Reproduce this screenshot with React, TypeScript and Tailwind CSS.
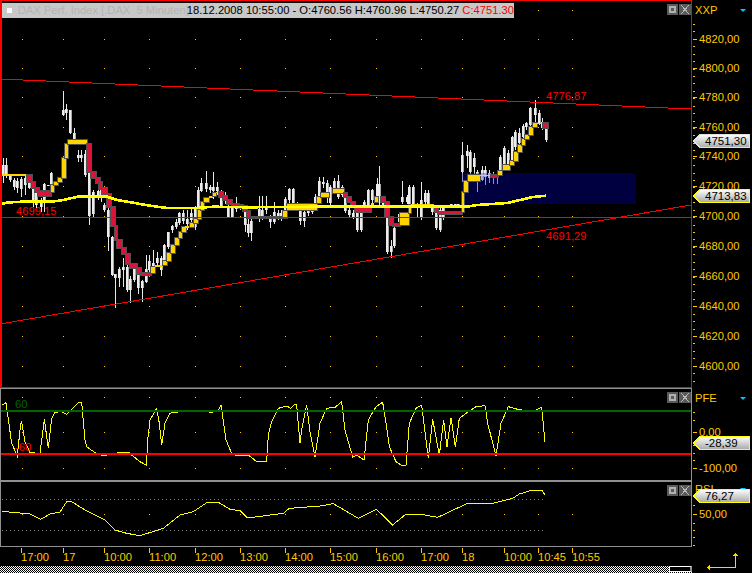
import React from "react";

type Candle = [number, number, number, number, number];
type Block = [number, number, number, number, "y" | "r"];

const candles: Candle[] = [
  [3,158,165,175,183],[6,158,165,175,178],[10,175,176,180,182],[14,178,180,187,190],[17,178,181,188,193],[21,177,179,189,197],[25,176,178,185,195],[29,182,183,188,189],[33,185,189,203,207],[36,188,190,205,208],[41,198,200,207,212],[44,183,184,200,212],[48,185,185,186,186],[51,172,173,184,187],
  [63,91,110,115,116],[66,104,109,113,120],[70,110,110,133,134],[74,128,133,140,141],[78,150,155,158,162],[81,150,155,158,162],[85,150,154,175,177],[89,172,172,216,225],[93,190,192,214,217],[98,189,191,195,200],[101,187,189,195,202],[104,203,205,210,212],[108,208,210,237,251],[112,236,237,275,276],[115,274,274,278,308],[119,267,269,278,287],[123,258,267,270,287],[127,265,267,290,292],[130,276,279,290,303],[134,266,269,280,282],[138,268,274,288,294],[142,280,281,288,302],[146,255,269,282,283],[149,255,261,270,272],[153,250,263,267,270],[157,252,258,263,265],[161,256,258,270,276],[164,244,245,261,263],[168,232,232,247,249],[172,225,226,230,233],[176,219,222,227,229],[179,212,213,223,225],[183,210,213,221,224],[187,210,219,224,230],[191,208,213,220,222],[195,206,209,227,230],[198,187,190,209,210],[201,178,183,191,192],[206,171,183,189,192],[210,185,187,190,193],[213,172,187,191,199],[217,182,187,191,195],[221,190,193,207,208],[225,192,196,199,204],[228,200,207,217,218],[232,203,208,217,218],[236,197,206,209,212],[240,204,205,208,210],[245,205,212,225,232],[248,210,224,233,237],
  [251,217,221,233,241],[259,196,209,218,222],[262,196,210,216,220],[266,196,207,210,214],[270,215,218,222,228],[274,202,212,222,224],[278,210,213,218,220],[281,210,213,218,221],[285,197,199,211,212],[289,188,189,200,203],[293,188,189,203,205],[297,202,205,208,210],[300,206,209,221,225],[304,208,212,221,227],[308,208,210,213,216],[312,206,208,212,214],[315,194,197,203,205],[319,177,181,197,198],[323,177,182,184,188],[327,180,183,193,203],[330,185,187,203,205],[334,178,181,188,192],[338,175,181,197,199],[342,185,187,195,197],[345,193,197,211,213],[349,208,210,215,217],[353,210,213,217,219],[357,208,213,230,232],[361,208,213,230,232],[364,200,202,205,208],[368,189,190,205,207],[372,189,190,200,203],[377,178,184,197,199],[379,166,184,203,205],[383,200,203,205,208],[387,202,217,252,254],[391,240,246,252,258],[394,226,228,246,248],[399,212,214,222,224],[402,181,197,202,204],[407,195,197,202,204],[409,185,187,205,206],[413,185,187,205,206],[417,203,205,208,218],[421,182,200,218,220],[425,190,193,202,205],[428,190,193,205,208],[432,205,208,212,215],[436,205,212,228,230],[440,205,210,230,232],[443,205,208,218,220],[451,204,204,206,208],[455,204,204,205,205],[458,204,204,205,205],
  [462,142,155,172,182],[467,145,151,156,168],[470,150,152,172,174],[474,153,158,167,175],[477,170,172,174,192],[482,166,170,180,181],[485,166,170,177,185],[489,170,173,178,183],[493,172,175,178,184],[497,170,175,178,184],[500,155,157,170,172],[504,146,148,165,167],[508,150,153,168,170],[512,136,137,163,165],[515,130,132,147,150],[519,128,133,143,146],[523,124,126,137,140],[526,122,123,127,130],[530,107,108,125,127],[535,100,108,115,128],[539,110,113,123,125],[542,118,122,128,130],[546,126,128,140,142],
];

const blocks: Block[] = [
  [1,174,26,2,"y"],[27,175,5,7,"r"],[32,182,3,6,"r"],[35,188,4,4,"r"],[38,191,13,5,"r"],[51,185,3,7,"y"],[54,182,4,3,"y"],[58,178,4,4,"y"],[62,158,4,20,"y"],[65,144,3,14,"y"],[68,140,19,4,"y"],[87,144,4,28,"r"],[91,172,5,6,"r"],[96,178,4,5,"r"],[99,182,3,7,"r"],[102,188,5,6,"r"],[107,194,4,13,"r"],[111,207,4,19,"r"],[115,226,2,14,"r"],[117,240,5,8,"r"],[122,248,4,6,"r"],[126,254,4,10,"r"],[130,264,7,4,"r"],[137,268,4,6,"r"],[141,273,10,2,"r"],
  [151,267,4,6,"y"],[155,265,8,2,"y"],[163,261,4,4,"y"],[167,253,4,8,"y"],[171,245,4,8,"y"],[175,238,4,7,"y"],[179,232,3,6,"y"],[182,227,4,5,"y"],[185,226,5,2,"y"],[190,223,4,4,"y"],[194,219,4,4,"y"],[198,210,3,9,"y"],[201,202,3,8,"y"],[204,198,5,4,"y"],[209,196,4,2,"y"],[213,193,3,3,"y"],[216,192,3,1,"y"],
  [219,192,4,5,"r"],[223,196,4,4,"r"],[227,200,5,4,"r"],[232,204,7,2,"r"],[239,205,4,3,"r"],[243,206,4,5,"r"],[247,211,3,7,"r"],[250,217,33,1,"r"],
  [283,211,4,7,"y"],[287,204,30,6,"y"],[317,197,4,6,"y"],[321,193,8,4,"y"],[333,189,11,4,"y"],[344,193,3,4,"r"],[347,197,4,5,"r"],[351,202,4,3,"r"],[355,207,16,5,"r"],[371,203,3,2,"y"],[375,197,3,5,"y"],[381,197,4,5,"r"],[385,202,4,15,"r"],[389,217,4,8,"r"],[393,224,7,2,"r"],[400,213,9,12,"y"],[409,205,2,8,"y"],[411,204,23,2,"y"],[435,207,3,5,"r"],[438,212,24,2,"r"],
  [462,192,2,20,"y"],[464,181,4,11,"y"],[468,175,12,6,"y"],[480,175,10,1,"y"],[491,175,7,2,"r"],[498,171,4,4,"y"],[503,165,7,5,"y"],[510,161,4,4,"y"],[514,152,4,9,"y"],[518,145,4,7,"y"],[522,139,3,6,"y"],[525,135,4,4,"y"],[529,127,4,8,"y"],[533,123,4,4,"y"],[537,123,6,1,"y"],[543,123,5,5,"r"],
];

const ma = "2,204 7,202.5 22,201.7 52,201.7 63,200 78,196.7 107,196.7 117,200 133,202.7 150,205.7 167,208 197,208 213,206.7 247,207.3 323,206.7 383,206.7 467,206.7 477,205 507,203 533,197 546,195.7";

const pfe1 = [[6,75],[18,68],[28,140],[35,190],[52,228],[62,130],[65,125],[75,185],[90,218],[120,220],[133,118],[145,205],[155,115],[165,97],[185,95],[200,103],[218,85],[235,68],[245,67],[255,180],[260,200],[285,218],[310,227],[340,222],[365,216],[388,216],[395,225],[420,245],[440,256],[442,190],[450,120],[470,85],[478,130],[485,195],[495,130],[510,100],[522,97],[580,92],[637,97],[655,90],[663,75],[678,180],[695,220],[710,227],[725,227],[745,225],[770,245],[800,245],[805,165],[815,125],[835,85],[860,78],[872,85],[885,73],[890,75],[900,190],[905,150],[920,75],[930,155],[945,230],[960,130],[980,85],[1005,82],[1025,65],[1035,150],[1058,232],[1070,225],[1092,240],[1105,120],[1128,80]];
const pfe2 = [[0,80],[20,67],[30,130],[40,200],[60,245],[75,255],[90,255],[100,130],[120,85],[137,75],[157,235],[170,118],[190,225],[203,120],[213,200],[225,113],[238,200],[250,115],[270,100],[300,80],[327,77],[335,130],[360,228],[375,130],[397,80],[425,88],[470,95],[497,82],[507,185]];
const rsi1 = [[6,394],[50,398],[90,402],[122,418],[150,402],[180,396],[200,365],[215,365],[260,393],[315,420],[345,450],[380,460],[420,467],[490,445],[540,405],[580,395],[620,368],[655,367],[690,388],[720,392],[742,414],[850,400],[868,385],[960,378],[1000,371],[1075,415],[1128,388]];
const rsi2 = [[0,388],[20,405],[50,435],[90,402],[130,402],[185,412],[270,372],[350,370],[410,355],[430,342],[470,330],[497,330],[507,345]];

const toPts = (a: number[][], ox: number) => a.map(([x, y]) => `${ox + x / 3},${380 + y / 3}`).join(" ");

const gridX = [22, 63, 104, 149, 195, 240, 285, 330, 376, 421, 462, 504, 538, 572];
const gridY = [39, 68, 97, 127, 156, 186, 216, 246, 276, 306, 336, 366];
const times: [number, string][] = [
  [21, "17:00"], [63, "17"], [104, "10:00"], [149, "11:00"], [195, "12:00"], [240, "13:00"], [285, "14:00"], [330, "15:00"], [376, "16:00"], [421, "17:00"], [462, "18"], [504, "10:00"], [538, "10:45"], [572, "10:55"],
];

function Dots({ ys }: { ys: number[] }) {
  return (
    <g fill="#ffc800">
      {ys.flatMap((y) => gridX.map((x) => <rect key={`${x}-${y}`} x={x} y={y} width={1} height={1} />))}
    </g>
  );
}

function Candles({ body, side, wick }: { body: string; side: string; wick: string }) {
  return (
    <g>
      {candles.map(([x, hi, top, bot, lo], i) => (
        <g key={i}>
          <rect x={x} y={hi} width={1} height={lo - hi} fill={wick} />
          <rect x={x - 1} y={top} width={2} height={Math.max(bot - top, 1)} fill={body} />
          <rect x={x + 1} y={top} width={1} height={Math.max(bot - top, 1)} fill={side} />
        </g>
      ))}
    </g>
  );
}

function WinButtons() {
  return (
    <div className="absolute top-[3px] right-0 flex gap-[1px]">
      <div className="w-[11px] h-[11px] bg-[#5a5a5a] flex items-center justify-center">
        <div className="w-[7px] h-[7px] border-2 border-[#b0b0b0]" />
      </div>
      <div className="w-[12px] h-[11px] bg-[#5a5a5a]">
        <svg viewBox="0 0 12 11" className="w-full h-full" shapeRendering="crispEdges">
          <path d="M2 1L10 10M10 1L2 10" stroke="#b8b8b8" strokeWidth="1" fill="none" />
        </svg>
      </div>
    </div>
  );
}

function Tag({ top, label, border }: { top: number; label: string; border: string }) {
  return (
    <div className="absolute left-[1px] w-[57px] h-[14px]" style={{ top }}>
      <svg viewBox="0 0 57 14" className="absolute inset-0 w-full h-full" shapeRendering="crispEdges">
        <defs>
          <linearGradient id={`g${top}`} x1="0" y1="0" x2="0" y2="1">
            <stop offset="0" stopColor="#ffffff" />
            <stop offset="1" stopColor="#a8a8a8" />
          </linearGradient>
        </defs>
        <path d="M0.5 7L7 0.5H56.5V13.5H7Z" fill={`url(#g${top})`} stroke={border} />
      </svg>
      <span className="absolute left-[12px] top-0 leading-[14px] text-[11.5px] text-black whitespace-nowrap">{label}</span>
    </div>
  );
}

function AxisHeader({ name, className }: { name: string; className: string }) {
  return (
    <div className={`absolute inset-x-0 flex items-center justify-between pl-[3px] pr-[6px] h-[14px] text-[11.2px] text-[#ffc800] ${className}`}>
      <span>{name}</span>
      <div className="w-0 h-0 border-x-[3px] border-x-transparent border-t-[3px] border-t-[#00c8ff]" />
    </div>
  );
}

function AxisSvg({ h, vy, ticks, majors, labels }: { h: number; vy: number; ticks: number[]; majors: number[]; labels: [number, string][] }) {
  return (
    <svg viewBox={`692 ${vy} 60 ${h}`} className="block w-[60px]" style={{ height: h }} shapeRendering="crispEdges">
      {ticks.map((y, i) => <rect key={i} x={693} y={y} width={2} height={1} fill="#ffc800" />)}
      {majors.map((y, i) => <rect key={i} x={693} y={y} width={4} height={1} fill="#ffc800" />)}
      {labels.map(([y, t]) => (
        <text key={t} x={699} y={y + 4} fill="#ffc800" fontSize="11.2">{t}</text>
      ))}
    </svg>
  );
}

const priceTicks = Array.from({ length: 50 }, (_, i) => Math.round(24 + i * 7.43));

export default function App() {
  return (
    <div className="w-[752px] h-[573px] bg-black flex overflow-hidden font-['Liberation_Sans',sans-serif]">
      <div className="w-[692px] h-[573px] flex flex-col">
        <div className="relative shrink-0 h-[388px] border-t border-r border-b border-l-2 border-[#ff0000]">
          <svg viewBox="2 1 689 386" className="block w-[689px] h-[386px]" shapeRendering="crispEdges">
            <defs>
              <clipPath id="zone"><rect x={462} y={173} width={174} height={31} /></clipPath>
            </defs>
            <Dots ys={[10, ...gridY]} />
            <text x={16} y={215} fill="#ff0000" fontSize="11.2">4699,15</text>
            <text x={546} y={100} fill="#ff0000" fontSize="11.2">4776,87</text>
            <text x={546} y={240} fill="#ff0000" fontSize="11.2">4691,29</text>
            <Candles body="#ececec" side="#a8a8a8" wick="#e8e8e8" />
            <rect x={462} y={173} width={174} height={31} fill="#000040" />
            <g clipPath="url(#zone)">
              <Candles body="#a8a8e8" side="#8080c0" wick="#9090d8" />
            </g>
            {blocks.map(([x, y, w, h, c], i) =>
              c === "y" && h <= 2 ? (
                <rect key={i} x={x} y={y} width={w} height={h} fill="#ffd400" />
              ) : (
                <rect key={i} x={x - 0.5} y={y - 0.5} width={w + 1} height={h + 1} fill={c === "y" ? "#ffd400" : "#dc143c"} stroke="#505050" />
              )
            )}
            <polyline points={ma} fill="none" stroke="#ffff00" strokeWidth="2.6" />
            <line x1="0" y1="79" x2="691" y2="109" stroke="#ff0000" />
            <line x1="0" y1="324" x2="691" y2="205" stroke="#ff0000" />
            <line x1="0" y1="217" x2="691" y2="217" stroke="#ff0000" />
          </svg>
          <div className="absolute left-0 top-[2px] h-[15px] w-[512px] bg-[#c8c8c8] flex items-center text-[11.2px] whitespace-nowrap">
            <div className="ml-[5px] mr-[6px] w-[5px] h-[5px] bg-white" />
            <span className="text-[#b4b4b4] w-[170px]">DAX Perf. Index [.DAX&nbsp;&nbsp;5 Minuten]</span>
            <span className="text-black ml-[-1px]">18.12.2008 10:55:00 - O:4760.56 H:4760.96 L:4750.27 <span className="text-[#ff0000]">C:4751.30</span></span>
          </div>
          <WinButtons />
        </div>

        <div className="relative shrink-0 h-[92px] border-t border-l border-r border-[#909090]">
          <svg viewBox="1 389 690 91" className="block w-[690px] h-[91px]" shapeRendering="crispEdges">
            <Dots ys={[397, 432, 468]} />
            <polyline points={toPts(pfe1, 0)} fill="none" stroke="#ffff00" />
            <polyline points={toPts(pfe2, 376)} fill="none" stroke="#ffff00" />
            <rect x={1} y={410} width={690} height={2} fill="#006400" />
            <rect x={1} y={453} width={690} height={2} fill="#ff0000" />
            <text x={15} y={408} fill="#006400" fontSize="11.2">60</text>
            <text x={15} y={451} fill="#ff0000" fontSize="11.2">-60</text>
          </svg>
          <WinButtons />
        </div>

        <div className="relative shrink-0 h-[67px] border-t-2 border-b border-l border-r border-[#909090]">
          <svg viewBox="1 482 690 64" className="block w-[690px] h-[64px]" shapeRendering="crispEdges">
            <Dots ys={[514]} />
            {[499, 530].map((y) => (
              <line key={y} x1="2" y1={y + 0.5} x2="543" y2={y + 0.5} stroke="#808080" strokeDasharray="1 3" />
            ))}
            <polyline points={toPts(rsi1, 0)} fill="none" stroke="#ffff00" />
            <polyline points={toPts(rsi2, 376)} fill="none" stroke="#ffff00" />
          </svg>
          <WinButtons />
        </div>

        <svg viewBox="0 547 692 19" className="block shrink-0 w-[692px] h-[19px]" shapeRendering="crispEdges">
          {times.map(([x, t], i) => (
            <g key={i}>
              <rect x={x} y={548} width={1} height={5} fill="#ffc800" />
              <text x={x} y={561} fill="#ffc800" fontSize="11.2">{t}</text>
            </g>
          ))}
        </svg>

        <div className="shrink-0 h-[7px] flex justify-end bg-[repeating-conic-gradient(#ffffff_0_25%,#000000_0_50%)] bg-[length:2px_2px]">
          <div className="w-[23px] h-[6px] border border-white border-r-2 border-r-[#909090] bg-black" />
        </div>
      </div>

      <div className="w-[60px] h-[573px] flex flex-col">
        <div className="relative shrink-0 h-[388px]">
          <AxisSvg h={388} vy={0} ticks={priceTicks} majors={gridY} labels={gridY.map((y, i) => [y, `${4820 - i * 20},00`] as [number, string])} />
          <AxisHeader name="XXP" className="top-[3px]" />
          <Tag top={134} label="4751,30" border="#e0e0e0" />
          <Tag top={189} label="4713,83" border="#ffff00" />
        </div>
        <div className="relative shrink-0 h-[92px]">
          <AxisSvg h={92} vy={388} ticks={[412, 420, 445, 453, 460]} majors={[432, 468]} labels={[[432, "0,00"], [468, "-100,00"]]} />
          <AxisHeader name="PFE" className="top-[3px]" />
          <Tag top={48} label="-28,39" border="#ffff00" />
        </div>
        <div className="relative shrink-0 h-[66px]">
          <AxisSvg h={66} vy={480} ticks={[495, 505, 523, 530, 537, 545]} majors={[514]} labels={[[514, "50,00"]]} />
          <AxisHeader name="RSI" className="top-[2px]" />
          <Tag top={9} label="76,27" border="#ffff00" />
        </div>
        <svg viewBox="692 546 60 27" className="block shrink-0 w-[60px] h-[27px]" shapeRendering="crispEdges">
          <rect x={735} y={553} width={1} height={15} fill="#ffd400" />
          <rect x={707} y={567} width={29} height={1} fill="#ffd400" />
          <rect x={734} y={554} width={3} height={1} fill="#ffd400" />
          <rect x={733} y={555} width={5} height={1} fill="#ffd400" />
          <rect x={708} y={566} width={1} height={3} fill="#ffd400" />
          <rect x={709} y={565} width={1} height={5} fill="#ffd400" />
        </svg>
      </div>
    </div>
  );
}
